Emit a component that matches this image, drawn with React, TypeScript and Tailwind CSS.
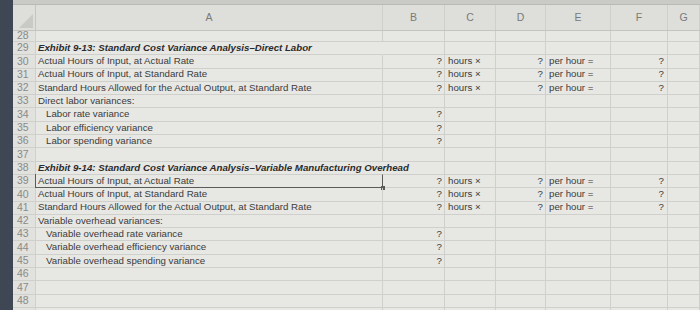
import React from 'react';

type Row = {
    n: string;
    a?: string;
    bold?: boolean;
    indent?: boolean;
    calc?: boolean;
    q?: boolean;
    active?: boolean;
};

const rows: Row[] = [
    { n: '29', a: 'Exhibit 9-13: Standard Cost Variance Analysis–Direct Labor', bold: true },
    { n: '30', a: 'Actual Hours of Input, at Actual Rate', calc: true },
    { n: '31', a: 'Actual Hours of Input, at Standard Rate', calc: true },
    { n: '32', a: 'Standard Hours Allowed for the Actual Output, at Standard Rate', calc: true },
    { n: '33', a: 'Direct labor variances:' },
    { n: '34', a: 'Labor rate variance', indent: true, q: true },
    { n: '35', a: 'Labor efficiency variance', indent: true, q: true },
    { n: '36', a: 'Labor spending variance', indent: true, q: true },
    { n: '37' },
    { n: '38', a: 'Exhibit 9-14: Standard Cost Variance Analysis–Variable Manufacturing Overhead', bold: true },
    { n: '39', a: 'Actual Hours of Input, at Actual Rate', calc: true, active: true },
    { n: '40', a: 'Actual Hours of Input, at Standard Rate', calc: true },
    { n: '41', a: 'Standard Hours Allowed for the Actual Output, at Standard Rate', calc: true },
    { n: '42', a: 'Variable overhead variances:' },
    { n: '43', a: 'Variable overhead rate variance', indent: true, q: true },
    { n: '44', a: 'Variable overhead efficiency variance', indent: true, q: true },
    { n: '45', a: 'Variable overhead spending variance', indent: true, q: true },
    { n: '46' },
    { n: '47' },
    { n: '48' },
];

const cols = ['A', 'B', 'C', 'D', 'E', 'F', 'G'];
const grid = 'grid grid-cols-[23px_347px_62px_51px_50px_65px_57px_1fr] shrink-0';
const cell = 'border-r border-b border-[#cfcfcc] h-[13.3px] flex items-center whitespace-nowrap';

const App: React.FC = () => {
    return (
        <div className="w-[700px] h-[310px] overflow-hidden flex bg-[#e7e7e4] font-['Liberation_Sans',Arial,sans-serif] text-[#3b3b3b]">
            <div className="w-[13px] shrink-0 bg-[#3f4755]" />
            <div className="flex-1 flex flex-col">
                <div className="h-[5px] shrink-0 bg-[#cacac7] border-b border-[#b9b9b6]" />
                {/* column headers */}
                <div className={`${grid} h-[26px] bg-[#dededb] border-b border-[#c4c4c1]`}>
                    <div className="relative border-r border-[#c4c4c1]">
                        <div className="absolute right-[2px] bottom-[2px] w-0 h-0 border-l-[14px] border-l-transparent border-b-[14px] border-b-[#c9c9c6]" />
                    </div>
                    {cols.map((c) => (
                        <div key={c} className="border-r border-[#cfcfcc] flex items-center justify-center text-[10.5px] text-[#7a7a78]">
                            {c}
                        </div>
                    ))}
                </div>
                {/* row 28, cut off at top */}
                <div className={`${grid} h-[11px]`}>
                    <div className="border-r border-b border-[#cfcfcc] bg-[#e1e1de] overflow-hidden flex items-end pl-[4px] text-[10.5px] leading-[12px] text-[#8a8a88]">
                        28
                    </div>
                    {cols.map((c) => (
                        <div key={c} className="border-r border-b border-[#cfcfcc]" />
                    ))}
                </div>
                {rows.map((r) => (
                    <div key={r.n} className={grid}>
                        <div className={`${cell} bg-[#e1e1de] pl-[4px] text-[10.5px] text-[#8a8a88]`}>{r.n}</div>
                        <div
                            className={`${cell} relative text-[9.7px] ${r.indent ? 'pl-[10px]' : 'pl-[2px]'} ${r.bold ? 'font-bold italic text-[#2b2b2b] border-r-transparent z-10' : ''}`}
                        >
                            {r.active && (
                                <div className="absolute left-[-1px] right-[-1px] top-[-1px] bottom-[-1px] border-[1.5px] border-[#5a5a58]">
                                    <div className="absolute right-[-3px] bottom-[-3px] w-[4px] h-[4px] bg-[#5a5a58]" />
                                </div>
                            )}
                            {r.a}
                        </div>
                        <div className={`${cell} justify-end pr-[2px] text-[9.7px]`}>{r.calc || r.q ? '?' : ''}</div>
                        <div className={`${cell} pl-[3px] text-[9.7px]`}>{r.calc ? 'hours ×' : ''}</div>
                        <div className={`${cell} justify-end pr-[2px] text-[9.7px]`}>{r.calc ? '?' : ''}</div>
                        <div className={`${cell} pl-[3px] text-[9.7px]`}>{r.calc ? 'per hour =' : ''}</div>
                        <div className={`${cell} justify-end pr-[3px] text-[9.7px]`}>{r.calc ? '?' : ''}</div>
                        <div className={cell} />
                    </div>
                ))}
                <div className={`${grid} h-[13.3px]`}>
                    <div className="border-r border-[#cfcfcc] bg-[#e1e1de]" />
                    {cols.map((c) => (
                        <div key={c} className="border-r border-[#cfcfcc]" />
                    ))}
                </div>
            </div>
        </div>
    );
};

export default App;
